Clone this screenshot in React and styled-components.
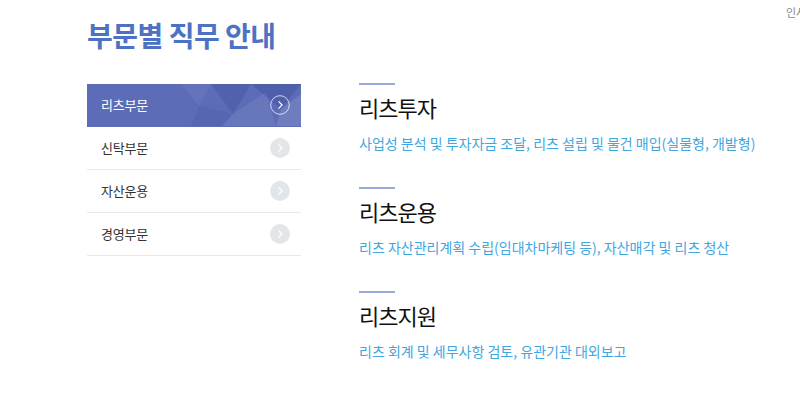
import styled, { createGlobalStyle } from 'styled-components';

const GlobalStyle = createGlobalStyle`
  html, body {
    margin: 0;
    padding: 0;
    background: #ffffff;
  }
  body {
    font-family: "Noto Sans CJK KR", "Noto Sans", sans-serif;
  }
`;

const menus = ['리츠부문', '신탁부문', '자산운용', '경영부문'];

const duties = [
  {
    title: '리츠투자',
    desc: '사업성 분석 및 투자자금 조달, 리츠 설립 및 물건 매입(실물형, 개발형)',
  },
  {
    title: '리츠운용',
    desc: '리츠 자산관리계획 수립(임대차마케팅 등), 자산매각 및 리츠 청산',
  },
  {
    title: '리츠지원',
    desc: '리츠 회계 및 세무사항 검토, 유관기관 대외보고',
  },
];

const ArrowIcon = ({ active }) => (
  <svg width="20" height="20" viewBox="0 0 20 20">
    {active ? (
      <circle cx="10" cy="10" r="9.3" fill="none" stroke="rgba(255,255,255,0.75)" strokeWidth="1" />
    ) : (
      <circle cx="10" cy="10" r="10" fill="#e3e6e8" />
    )}
    <path d="M8.6 6.4 L12.1 10 L8.6 13.6" fill="none" stroke="#ffffff" strokeWidth="1.2" />
  </svg>
);

const Pattern = () => (
  <svg width="120" height="43" viewBox="0 0 120 43">
    <polygon points="0,0 30,0 18,22" fill="rgba(255,255,255,0.06)" />
    <polygon points="30,0 70,0 52,30" fill="rgba(40,50,130,0.18)" />
    <polygon points="52,30 85,8 95,43 40,43" fill="rgba(255,255,255,0.08)" />
    <polygon points="70,0 120,0 100,25" fill="rgba(40,50,130,0.22)" />
    <polygon points="100,25 120,10 120,43 95,43" fill="rgba(255,255,255,0.12)" />
    <polygon points="18,22 52,30 40,43 10,43" fill="rgba(40,50,130,0.1)" />
  </svg>
);

const App = () => {
  return (
    <>
      <GlobalStyle />
      <Page>
        <TopLink>인사</TopLink>
        <Title>부문별 직무 안내</Title>
        <Body>
          <SideNav>
            {menus.map((m, i) => (
              <NavItem key={m} $active={i === 0}>
                {i === 0 && (
                  <PatternWrap>
                    <Pattern />
                  </PatternWrap>
                )}
                <NavLabel>{m}</NavLabel>
                <IconWrap>
                  <ArrowIcon active={i === 0} />
                </IconWrap>
              </NavItem>
            ))}
          </SideNav>
          <DutyList>
            {duties.map((d) => (
              <Duty key={d.title}>
                <Bar />
                <DutyTitle>{d.title}</DutyTitle>
                <DutyDesc>{d.desc}</DutyDesc>
              </Duty>
            ))}
          </DutyList>
        </Body>
      </Page>
    </>
  );
};

export default App;

const Page = styled.div`
  position: relative;
  width: 800px;
  height: 405px;
  padding: 15px 0 0 87px;
  box-sizing: border-box;
  overflow: hidden;
`;

const TopLink = styled.span`
  position: absolute;
  top: 4px;
  left: 786px;
  font-size: 11px;
  color: #8a8a8a;
  white-space: nowrap;
`;

const Title = styled.h1`
  margin: 0;
  font-size: 28px;
  font-weight: 700;
  line-height: 40px;
  color: #4d72c4;
  letter-spacing: -0.5px;
`;

const Body = styled.div`
  display: flex;
  margin-top: 29px;
`;

const SideNav = styled.ul`
  list-style: none;
  margin: 0;
  padding: 0;
  width: 214px;
`;

const NavItem = styled.li`
  position: relative;
  display: flex;
  align-items: center;
  justify-content: space-between;
  height: 43px;
  box-sizing: border-box;
  padding: 0 11px 0 14px;
  background: ${(p) => (p.$active ? '#5c6cb6' : '#ffffff')};
  color: ${(p) => (p.$active ? '#ffffff' : '#333333')};
  border-bottom: 1px solid ${(p) => (p.$active ? '#5c6cb6' : '#e9e9e9')};
  overflow: hidden;
`;

const PatternWrap = styled.div`
  position: absolute;
  right: 0;
  top: 0;
  line-height: 0;
`;

const NavLabel = styled.span`
  position: relative;
  top: -1px;
  font-size: 13px;
  letter-spacing: -0.2px;
`;

const IconWrap = styled.span`
  position: relative;
  display: flex;
  line-height: 0;
`;

const DutyList = styled.div`
  display: flex;
  flex-direction: column;
  gap: 35px;
  margin-left: 58px;
`;

const Duty = styled.div`
  display: flex;
  flex-direction: column;
`;

const Bar = styled.div`
  width: 36px;
  height: 2px;
  background: #98a9df;
  margin-top: -1px;
`;

const DutyTitle = styled.h2`
  margin: 7px 0 0;
  font-size: 22px;
  font-weight: 400;
  line-height: 30px;
  color: #111111;
  letter-spacing: -1px;
`;

const DutyDesc = styled.p`
  margin: 11px 0 0;
  font-size: 14px;
  line-height: 20px;
  color: #3fa6e0;
  letter-spacing: 0;
`;
